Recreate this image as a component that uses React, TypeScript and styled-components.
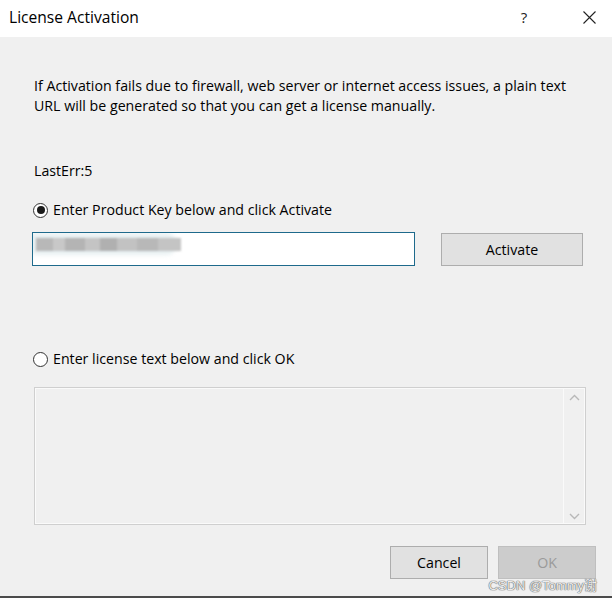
import React from "react";
import styled, { createGlobalStyle } from "styled-components";

const GlobalStyle = createGlobalStyle`
  html, body {
    margin: 0;
    padding: 0;
    background: #f0f0f0;
  }
  body {
    font-family: "Open Sans", "Noto Sans", "Liberation Sans", sans-serif;
    color: #000;
  }
`;

const Window = styled.div`
  position: relative;
  width: 612px;
  height: 598px;
  box-sizing: border-box;
  background: #f0f0f0;
  border-bottom: 2px solid #4b4b4b;
  display: flex;
  flex-direction: column;
`;

const TitleBar = styled.div`
  height: 37px;
  background: #ffffff;
  display: flex;
  align-items: center;
  padding-left: 9px;
  flex-shrink: 0;
`;

const Title = styled.div`
  flex: 1;
  font-size: 15.6px;
  color: #000;
  margin-top: -3px;
`;

const TitleButton = styled.div<{ $w: number }>`
  width: ${(p) => p.$w}px;
  height: 37px;
  display: flex;
  align-items: center;
  justify-content: center;
  font-size: 15px;
  color: #222;
  margin-top: -3px;
`;

const Body = styled.div`
  flex: 1;
  display: flex;
  flex-direction: column;
  padding: 39px 16px 0 34px;
  font-size: 14.2px;
`;

const Paragraph = styled.p`
  margin: 0;
  line-height: 20px;
  width: 545px;
`;

const ErrLine = styled.div`
  margin-top: 45px;
  line-height: 20px;
`;

const RadioRow = styled.label<{ $top: number }>`
  display: flex;
  align-items: center;
  gap: 5px;
  margin-top: ${(p) => p.$top}px;
  margin-left: -1px;
  line-height: 20px;
`;

const RadioCircle = styled.span<{ $checked?: boolean }>`
  width: 13px;
  height: 13px;
  border: 1px solid #333;
  border-radius: 50%;
  background: #fff;
  display: flex;
  align-items: center;
  justify-content: center;
  &::after {
    content: "";
    width: 8px;
    height: 8px;
    border-radius: 50%;
    background: ${(p) => (p.$checked ? "#1a1a1a" : "transparent")};
  }
`;

const KeyRow = styled.div`
  display: flex;
  align-items: center;
  margin-top: 12px;
  margin-left: -2px;
`;

const KeyInput = styled.div`
  position: relative;
  width: 383px;
  height: 34px;
  box-sizing: border-box;
  border: 1px solid #1e6a8c;
  background: #fff;
  overflow: hidden;
`;

const Blur = styled.div`
  position: absolute;
  left: -6px;
  top: 0;
  width: 150px;
  height: 22px;
  border-radius: 0 12px 12px 12px;
  background: #e8f0f2;
  filter: blur(2px);
`;

const BlurBlocks = styled.div`
  position: absolute;
  left: 3px;
  top: 5px;
  width: 145px;
  height: 13px;
  filter: blur(1px);
  background: linear-gradient(
    90deg,
    #b8b8b8 0 12%,
    #c8c8c8 12% 20%,
    #b4b4b4 20% 34%,
    #c4c4c4 34% 44%,
    #b0b0b0 44% 56%,
    #c2c2c2 56% 70%,
    #b8b8b8 70% 84%,
    #c4c4c4 84% 100%
  );
`;

const Button = styled.button<{ $w: number; $disabled?: boolean }>`
  width: ${(p) => p.$w}px;
  height: 33px;
  box-sizing: border-box;
  border: 1px solid ${(p) => (p.$disabled ? "#bfbfbf" : "#adadad")};
  background: ${(p) => (p.$disabled ? "#cccccc" : "#e1e1e1")};
  color: ${(p) => (p.$disabled ? "#9a9a9a" : "#000")};
  font-family: inherit;
  font-size: 14.2px;
  padding: 0;
  cursor: default;
`;

const ActivateButton = styled(Button)`
  margin-left: 26px;
`;

const TextBox = styled.div`
  margin-top: 18px;
  width: 552px;
  height: 138px;
  box-sizing: border-box;
  border: 1px solid #cfcfcf;
  outline: 1px solid #fafafa;
  outline-offset: -2px;
  display: flex;
  justify-content: flex-end;
`;

const ScrollBar = styled.div`
  width: 21px;
  border-left: 1px solid #fafafa;
  display: flex;
  flex-direction: column;
  justify-content: space-between;
  align-items: center;
  padding: 6px 0 4px;
`;

const Footer = styled.div`
  display: flex;
  justify-content: flex-end;
  gap: 10px;
  margin-top: 21px;
`;

const Watermark = styled.div`
  position: absolute;
  right: 15px;
  bottom: 2px;
  line-height: 16px;
  font-family: "Liberation Sans", "Noto Sans CJK SC", sans-serif;
  font-size: 13px;
  color: #ececec;
  text-shadow: 0 0 1px #666, 0 0 1px #666, 0 0 1px #888;
  pointer-events: none;
`;

const Chevron = ({ up }: { up?: boolean }) => (
  <svg width="11" height="7" viewBox="0 0 11 7">
    <path
      d={up ? "M1 6 L5.5 1.5 L10 6" : "M1 1 L5.5 5.5 L10 1"}
      fill="none"
      stroke="#b8b8b8"
      strokeWidth="1.4"
    />
  </svg>
);

const CloseIcon = () => (
  <svg width="13" height="13" viewBox="0 0 13 13">
    <path d="M0.5 0.5 L12.5 12.5 M12.5 0.5 L0.5 12.5" stroke="#222" strokeWidth="1.1" />
  </svg>
);

export default function App() {
  return (
    <>
      <GlobalStyle />
      <Window>
        <TitleBar>
          <Title>License Activation</Title>
          <TitleButton $w={30}>?</TitleButton>
          <TitleButton $w={32}></TitleButton>
          <TitleButton $w={36}>
            <CloseIcon />
          </TitleButton>
          <TitleButton $w={5}></TitleButton>
        </TitleBar>
        <Body>
          <Paragraph>
            If Activation fails due to firewall, web server or internet access issues, a plain text
            URL will be generated so that you can get a license manually.
          </Paragraph>
          <ErrLine>LastErr:5</ErrLine>
          <RadioRow $top={19}>
            <RadioCircle $checked />
            Enter Product Key below and click Activate
          </RadioRow>
          <KeyRow>
            <KeyInput>
              <Blur />
              <BlurBlocks />
            </KeyInput>
            <ActivateButton $w={142}>Activate</ActivateButton>
          </KeyRow>
          <RadioRow $top={83}>
            <RadioCircle />
            Enter license text below and click OK
          </RadioRow>
          <TextBox>
            <ScrollBar>
              <Chevron up />
              <Chevron />
            </ScrollBar>
          </TextBox>
          <Footer>
            <Button $w={98}>Cancel</Button>
            <Button $w={98} $disabled>
              OK
            </Button>
          </Footer>
        </Body>
        <Watermark>CSDN @Tommy谢</Watermark>
      </Window>
    </>
  );
}
